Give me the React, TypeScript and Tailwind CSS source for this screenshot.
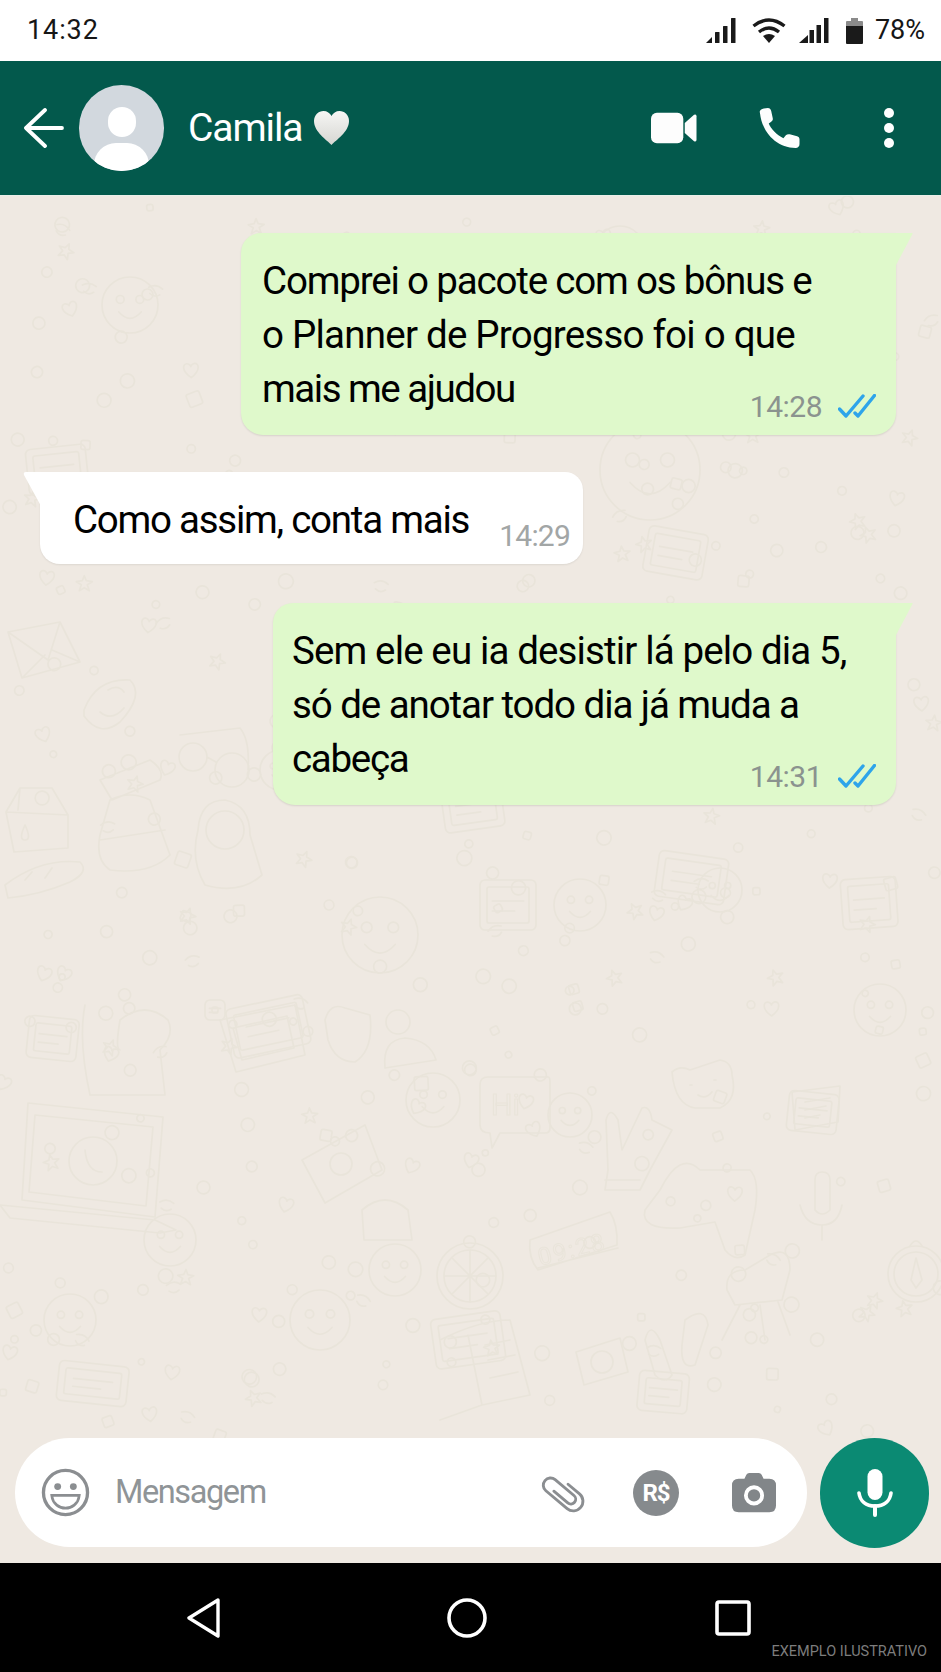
import React from "react";

const INK = "#e9e4da";

function mulberry(seed: number) {
  return () => {
    seed |= 0;
    seed = (seed + 0x6d2b79f5) | 0;
    let t = Math.imul(seed ^ (seed >>> 15), 1 | seed);
    t = (t + Math.imul(t ^ (t >>> 7), 61 | t)) ^ t;
    return ((t ^ (t >>> 14)) >>> 0) / 4294967296;
  };
}

function Doodles() {
  const rnd = mulberry(17);
  const small: React.ReactNode[] = [];
  for (let i = 0; i < 420; i++) {
    const x = rnd() * 941;
    const y = 196 + rnd() * 1240;
    const kind = rnd();
    const r = 3 + rnd() * 4.5;
    const rot = rnd() * 60 - 30;
    let el: React.ReactNode;
    if (kind < 0.62) el = <circle r={r} />;
    else if (kind < 0.72) el = <rect x={-r} y={-r} width={r * 2} height={r * 2} rx={2} />;
    else if (kind < 0.84) el = <path d="M0 -8 L2 -3 L8 -2 L3 1 L5 7 L0 4 L-5 7 L-3 1 L-8 -2 L-2 -3 Z" />;
    else if (kind < 0.92) el = <path d="M0 7 C-10 0 -8 -7 -4 -7 C-2 -7 0 -5 0 -4 C0 -5 2 -7 4 -7 C8 -7 10 0 0 7 Z" />;
    else el = <path d="M-7 -4 Q0 -9 7 -4 M-5 2 Q0 6 5 2" />;
    small.push(
      <g key={i} transform={`translate(${x.toFixed(1)} ${y.toFixed(1)}) rotate(${rot.toFixed(0)})`}>
        {el}
      </g>
    );
  }
  const face = (x: number, y: number, r: number) => (
    <g key={`f${x}-${y}`} transform={`translate(${x} ${y})`}>
      <circle r={r} />
      <circle cx={-r * 0.35} cy={-r * 0.2} r={r * 0.14} />
      <circle cx={r * 0.35} cy={-r * 0.2} r={r * 0.14} />
      <path d={`M${-r * 0.4} ${r * 0.25} Q0 ${r * 0.7} ${r * 0.4} ${r * 0.25}`} />
    </g>
  );
  const card = (x: number, y: number, w: number, h: number, rot: number) => (
    <g key={`c${x}-${y}`} transform={`translate(${x} ${y}) rotate(${rot})`}>
      <rect width={w} height={h} rx={5} />
      <rect x={7} y={7} width={w - 14} height={h - 14} rx={2} />
      <path d={`M${w * 0.22} ${h * 0.42} H${w * 0.78} M${w * 0.22} ${h * 0.62} H${w * 0.62}`} />
    </g>
  );
  return (
    <svg className="absolute inset-0 w-full h-full blur-[0.6px]" viewBox="0 196 941 1367" preserveAspectRatio="none" fill="none" stroke={INK} strokeWidth={1.7} strokeLinecap="round" strokeLinejoin="round" aria-hidden="true">
      {small}
      {/* laptop */}
      <path d="M28 1103 L163 1117 L155 1217 L22 1200 Z" />
      <path d="M35 1115 L153 1127 L146 1206 L29 1192 Z" />
      <path d="M0 1205 L155 1220 L176 1230 L160 1233 L10 1218 Z" />
      <circle cx="93" cy="1161" r="24" />
      <path d="M85 1150 Q87 1172 102 1172" />
      {/* envelope */}
      <path d="M8 632 L60 622 L80 662 L22 678 Z M8 632 L48 660 L60 622 M22 678 L45 655 M80 662 L52 650" />
      {/* lips face */}
      <path d="M84 710 Q96 678 130 680 Q145 695 120 722 Q100 738 84 716 Z M108 690 Q118 684 124 692 M100 712 Q112 722 124 708" />
      {/* glasses */}
      <circle cx="193" cy="757" r="14" />
      <circle cx="232" cy="770" r="17" />
      <path d="M180 735 L240 728 Q250 740 248 770 M207 757 L216 762" />
      {/* carton */}
      <path d="M6 812 L20 788 L52 788 L68 815 L68 848 L14 852 Z M20 788 L18 810 M6 812 L68 815" />
      <path d="M25 825 Q18 840 25 840 Q32 840 25 825 Z" />
      {/* backpack */}
      <path d="M100 780 L150 760 Q165 770 160 780 L112 800 Z M110 800 Q130 790 150 800 L170 855 Q150 875 110 870 Q95 860 100 835 Z M100 840 L165 830" />
      {/* astronaut */}
      <path d="M198 830 Q200 800 225 800 Q250 805 250 835 L262 875 Q240 895 205 885 Q190 860 198 830 Z" />
      <circle cx="225" cy="830" r="19" />
      {/* baguette */}
      <path d="M5 885 Q40 858 80 862 Q90 872 70 882 Q40 895 8 898 Z M25 880 L32 872 M45 878 L52 868" />
      {/* tablet */}
      <path d="M220 1020 L295 1005 L305 1055 L236 1072 Z M233 1028 L287 1016 L294 1048 L242 1060 Z" />
      {/* hand */}
      <path d="M325 1020 Q330 1002 345 1008 L370 1015 Q374 1050 355 1062 Q335 1062 328 1040 Z" />
      {/* dog */}
      <path d="M85 1005 Q78 1040 90 1095 L165 1095 L160 1050 Q175 1035 168 1020 Q145 1000 120 1020 Q115 1050 120 1050" />
      {/* person */}
      <circle cx="398" cy="1022" r="12" />
      <path d="M385 1068 Q382 1040 405 1038 Q430 1040 436 1060 Z" />
      {face(433, 1100, 27)}
      {/* camera card */}
      <path d="M302 1160 L365 1125 L382 1170 L325 1203 Z" />
      <circle cx="341" cy="1164" r="11" />
      {/* car */}
      <path d="M362 1210 Q385 1190 408 1210 L412 1240 L364 1240 Z" />
      {face(395, 1270, 26)}
      {/* Hi */}
      <path d="M488 1077 H548 Q550 1077 550 1082 V1128 Q550 1133 545 1133 H500 L492 1148 L490 1133 Q480 1133 480 1125 V1085 Q480 1077 488 1077 Z" />
      <text x="491" y="1115" fontFamily="Roboto, sans-serif" fontSize="30" strokeWidth="1.2">Hi</text>
      {/* raised hand */}
      <path d="M606 1120 Q610 1105 618 1120 L622 1150 L642 1108 Q650 1105 652 1120 L672 1130 L650 1170 L640 1190 H605 L608 1170 Z M605 1180 H640" />
      {/* bear */}
      <path d="M672 1072 Q680 1065 690 1070 L720 1060 Q732 1062 732 1075 Q738 1100 720 1108 H695 Q675 1105 672 1072 Z M690 1085 L692 1085 M714 1080 L716 1080 M698 1095 Q705 1100 712 1092" />
      {/* note */}
      <path d="M792 1092 L840 1086 L838 1122 L795 1130 Z M805 1102 L830 1098 M805 1110 L826 1106 M805 1118 L820 1115" />
      {/* controller / blob */}
      <path d="M660 1190 Q680 1150 700 1170 L750 1170 Q760 1180 755 1210 L745 1255 Q735 1262 725 1250 L715 1222 L680 1228 Q640 1230 645 1210 Z" />
      {/* mic */}
      <path d="M815 1180 Q815 1172 822 1172 Q830 1172 830 1180 V1210 Q822 1218 815 1210 Z M800 1205 Q805 1225 822 1225 Q838 1225 842 1205 M822 1225 V1240" />
      {/* clock */}
      <path d="M530 1240 L610 1212 Q618 1225 617 1245 L538 1270 Q528 1258 530 1240 Z M538 1268 L618 1248" />
      <text x="536" y="1258" fontFamily="Roboto, sans-serif" fontSize="24" strokeWidth="1" transform="rotate(-14 570 1245)" letterSpacing="2">09:28</text>
      {/* lemon */}
      <circle cx="470" cy="1276" r="33" />
      <circle cx="470" cy="1276" r="26" />
      <path d="M470 1250 V1302 M444 1276 H496 M452 1258 L488 1294 M488 1258 L452 1294" />
      {/* chair */}
      <path d="M727 1290 Q725 1270 745 1270 L770 1255 Q790 1245 790 1270 L782 1300 L735 1305 Z M740 1305 L722 1340 M760 1305 L765 1340 M778 1302 L790 1335" />
      {/* compass */}
      <circle cx="916" cy="1274" r="28" />
      <circle cx="916" cy="1274" r="22" />
      <path d="M916 1258 L922 1280 L916 1288 L911 1280 Z M910 1246 Q916 1236 922 1246" />
      {/* book */}
      <path d="M440 1340 Q480 1320 510 1320 L530 1395 L482 1405 L440 1420 M468 1335 L482 1405 M485 1345 L510 1340 M488 1360 L515 1355 M490 1378 L518 1372" />
      {/* camera */}
      <path d="M576 1352 L620 1338 L628 1372 L584 1385 Z" />
      <circle cx="602" cy="1362" r="11" />
      {/* flipflops */}
      <path d="M645 1340 Q650 1320 660 1340 L672 1375 Q665 1385 655 1375 Z M685 1320 Q705 1305 708 1325 L695 1365 Q680 1370 682 1345 Z" />
      {/* extras */}
      {[
        face(130, 305, 28), face(620, 250, 24), face(580, 905, 26), face(380, 935, 38), face(280, 770, 20), face(170, 1240, 26),
        face(320, 1320, 30), face(70, 1320, 26), face(720, 890, 22), face(880, 1010, 26), face(570, 1115, 22), face(650, 470, 50),
      ]}
      {[
        card(225, 1010, 78, 50, -12), card(660, 850, 70, 46, 8), card(25, 450, 60, 46, -6), card(60, 1360, 70, 40, 6),
        card(430, 1320, 70, 50, -8), card(650, 525, 60, 46, 10), card(840, 880, 55, 50, -4), card(790, 1090, 50, 40, 6),
        card(30, 1015, 50, 42, 6), card(205, 1000, 20, 20, 0), card(440, 790, 60, 44, -8), card(780, 610, 70, 50, 8),
        card(480, 880, 56, 50, 0), card(640, 1370, 50, 40, 5),
      ]}
    </svg>
  );
}

function Ticks() {
  return (
    <svg className="mt-[-2px]" width="38" height="24" viewBox="0 0 38 24" fill="none" stroke="#2ea4ea" strokeWidth="3.400" strokeLinecap="round" strokeLinejoin="round" aria-hidden="true">
      <path d="M1.500 15 L8 22 L25 2" />
      <path d="M17 19 L20 22 L36.500 1.500" />
    </svg>
  );
}

function Sent({ lines, time, width, pad }: { lines: { text: string; track: string }[]; time: string; width: string; pad: string }) {
  return (
    <div className={`relative self-end mr-[45px] ${width} rounded-b-[22px] rounded-tl-[20px] bg-[#dff9cb] shadow-[0_1px_2px_rgba(0,0,0,0.10)]`}>
      <svg className="absolute top-0 -right-[17px]" width="18" height="34" viewBox="0 0 18 34" aria-hidden="true">
        <path d="M0 0 H17 Q18 0 17.500 1 L0 34 Z" fill="#dff9cb" />
      </svg>
      <div className={`${pad} pt-[21px] pb-[19px]`}>
        {lines.map((l, i) => (
          <div key={i} className={`text-[38.500px] leading-[54px] ${l.track} text-black whitespace-nowrap h-[54px]`}>
            {l.text}
          </div>
        ))}
        <div className="absolute right-[20px] bottom-[11px] flex items-center gap-[16px]">
          <span className="text-[30px] leading-[34px] tracking-[-0.500px] text-[#8b938f]">{time}</span>
          <Ticks />
        </div>
      </div>
    </div>
  );
}

export default function App() {
  return (
    <div className="w-[941px] h-[1672px] flex flex-col overflow-hidden font-[Roboto,sans-serif] bg-[#efe9e2]">
      {/* status bar */}
      <div className="h-[61px] shrink-0 bg-white flex items-center justify-between pl-[27px] pr-[16px]">
        <span className="text-[27px] tracking-[0.900px] text-[#161616]">14:32</span>
        <div className="flex items-center">
          <svg width="32" height="28" viewBox="0 0 32 28" fill="#1a1a1a" aria-hidden="true">
            <path d="M1 26 L7 20 V26 Z" />
            <rect x="10" y="15" width="4.500" height="11" rx="0.500" />
            <rect x="18" y="9" width="4.500" height="17" rx="0.500" />
            <rect x="26" y="1" width="4.500" height="25" rx="0.500" />
          </svg>
          <svg className="ml-[15px]" width="34" height="28" viewBox="0 0 34 28" fill="none" stroke="#1a1a1a" strokeWidth="3.400" aria-hidden="true">
            <path d="M1.500 9 Q17 -3 32.500 9" />
            <path d="M7 15 Q17 7 27 15" />
            <path d="M17 26 L11 19 Q17 15 23 19 Z" fill="#1a1a1a" stroke="none" />
          </svg>
          <svg className="ml-[12px]" width="32" height="28" viewBox="0 0 32 28" fill="#1a1a1a" aria-hidden="true">
            <path d="M1 26 L10 18 V26 Z" />
            <rect x="11.500" y="13" width="4.500" height="13" />
            <rect x="18.500" y="8" width="4.500" height="18" />
            <rect x="26" y="1" width="4.500" height="25" />
          </svg>
          <svg className="ml-[16px]" width="17" height="28" viewBox="0 0 17 28" aria-hidden="true">
            <path d="M5 1 H12 V4 H16 A1 1 0 0 1 17 5 V9 H0 V5 A1 1 0 0 1 1 4 H5 Z" fill="#8a8a8a" />
            <path d="M0 9 H17 V26 A1 1 0 0 1 16 27 H1 A1 1 0 0 1 0 26 Z" fill="#1a1a1a" />
          </svg>
          <span className="ml-[12px] text-[27px] text-[#161616]">78%</span>
        </div>
      </div>

      {/* header */}
      <div className="h-[135px] shrink-0 bg-[#03594c] flex items-center border-b border-[#e9efe9] pl-[24px] pr-[47px] text-white">
        <svg width="40" height="40" viewBox="0 0 40 40" fill="none" stroke="#fff" strokeWidth="3.800" strokeLinecap="round" strokeLinejoin="round" aria-hidden="true">
          <path d="M38 20 H3" />
          <path d="M21 2 L2 20 L21 38" />
        </svg>
        <div className="ml-[15px] relative w-[85px] h-[86px] rounded-full bg-[#d2d8de] overflow-hidden">
          <div className="absolute left-[29px] top-[22px] w-[28px] h-[30px] rounded-full bg-white" />
          <div className="absolute left-[15px] top-[58px] w-[55px] h-[44px] rounded-full bg-white" />
        </div>
        <span className="ml-[24px] text-[39px] leading-none tracking-[-1.100px]">Camila</span>
        <svg className="ml-[11px]" width="37" height="36" viewBox="0 0 37 36" aria-hidden="true">
          <defs>
            <linearGradient id="hg" x1="0" y1="0" x2="0" y2="1">
              <stop offset="0" stopColor="#f6f6f4" />
              <stop offset="1" stopColor="#d6d6d2" />
            </linearGradient>
          </defs>
          <path d="M18.500 35 C14 30 1 22 1 11 C1 5 5.500 1 10.500 1 C14 1 17 3 18.500 6 C20 3 23 1 26.500 1 C31.500 1 36 5 36 11 C36 22 23 30 18.500 35 Z" fill="url(#hg)" />
        </svg>
        <div className="ml-auto flex items-center">
          <svg width="46" height="32" viewBox="0 0 47 32" fill="#fdfdfd" aria-hidden="true">
            <rect x="0" y="0.500" width="33" height="31" rx="6" />
            <path d="M34.500 11 L44 2.500 Q46.500 1.500 46.500 4 V28 Q46.500 30.500 44 29.500 L34.500 21 Z" />
          </svg>
          <svg className="ml-[62px]" width="41" height="41" viewBox="0 0 42 42" fill="#fdfdfd" aria-hidden="true">
            <path d="M1 5 C0 3 2 1 5 0.500 L9 0 C11 0 12 1 12.500 3 L14 10 C14.500 12 14 13 12.500 14 L10 16 C12 21 18 28 25 31 L27.500 28 C28.500 27 30 26.500 31.500 27 L39 29 C40.500 29.500 41.500 30.500 41.500 32 V37 C41.500 39.500 40 41 37.500 41 C18 41 3 25 1 5 Z" />
          </svg>
          <div className="ml-[84px] flex flex-col gap-[5px]">
            <div className="w-[10px] h-[10px] rounded-full bg-white" />
            <div className="w-[10px] h-[10px] rounded-full bg-white" />
            <div className="w-[10px] h-[10px] rounded-full bg-white" />
          </div>
        </div>
      </div>

      {/* chat */}
      <div className="relative flex-1 min-h-0 bg-[#efe9e2] flex flex-col">
        <Doodles />
        <div className="relative flex-1 flex flex-col pt-[37px]">
          <Sent
            lines={[
              { text: "Comprei o pacote com os bônus e", track: "tracking-[-1.170px]" },
              { text: "o Planner de Progresso foi o que", track: "tracking-[-0.770px]" },
              { text: "mais me ajudou", track: "tracking-[-1.480px]" },
            ]}
            time="14:28"
            width="w-[655px]"
            pad="pl-[21px]"
          />
          <div className="relative self-start ml-[40px] mt-[37px] w-[543px] h-[92px] rounded-b-[20px] rounded-tr-[18px] bg-white shadow-[0_1px_2px_rgba(0,0,0,0.08)]">
            <svg className="absolute top-0 -left-[17px]" width="18" height="34" viewBox="0 0 18 34" aria-hidden="true">
              <path d="M18 0 H3 Q0 0 1 3 L18 34 Z" fill="#fff" />
            </svg>
            <div className="pl-[33px] pt-[21px] text-[38.500px] leading-[54px] tracking-[-1.250px] text-black whitespace-nowrap">Como assim, conta mais</div>
            <span className="absolute right-[13px] bottom-[11px] text-[30px] leading-[34px] tracking-[-0.800px] text-[#a2a6a6]">14:29</span>
          </div>
          <div className="mt-[39px] flex flex-col">
            <Sent
              lines={[
                { text: "Sem ele eu ia desistir lá pelo dia 5,", track: "tracking-[-0.870px]" },
                { text: "só de anotar todo dia já muda a", track: "tracking-[-1.070px]" },
                { text: "cabeça", track: "tracking-[-1.300px]" },
              ]}
              time="14:31"
              width="w-[623px]"
              pad="pl-[19px]"
            />
          </div>
        </div>

        {/* input */}
        <div className="relative h-[126px] shrink-0 flex items-start pl-[15px] pt-[1px] gap-[13px]">
          <div className="w-[792px] h-[109px] rounded-full bg-white flex items-center pl-[26px] pr-[31px]">
            <svg width="49" height="49" viewBox="0 0 50 50" fill="none" stroke="#8b8e91" strokeWidth="3.400" aria-hidden="true">
              <circle cx="25" cy="25" r="22.500" />
              <circle cx="17" cy="19" r="3.500" fill="#8b8e91" stroke="none" />
              <circle cx="33" cy="19" r="3.500" fill="#8b8e91" stroke="none" />
              <path d="M11 28 H39 C38 37 31 41 25 41 C19 41 12 37 11 28 Z" strokeWidth="2.800" />
              <path d="M14 33 H36" strokeWidth="2" stroke="#fff" />
            </svg>
            <span className="ml-[25px] text-[32.500px] tracking-[-1.400px] text-[#8f9497]">Mensagem</span>
            <div className="ml-auto flex items-center">
              <svg width="47" height="44" viewBox="0 0 44 41" fill="none" stroke="#8b8e91" strokeWidth="2.700" strokeLinecap="round" strokeLinejoin="round" aria-hidden="true">
                <g transform="translate(22 20.500) rotate(40) translate(-21 -9)">
                  <path d="M19 0 H33 A9 9 0 0 1 33 18 H7 A6.750 6.750 0 0 1 7 4.500 H30 A4.500 4.500 0 0 1 30 13.500 H13" />
                </g>
              </svg>
              <div className="ml-[46px] w-[46px] h-[46px] rounded-full bg-[#868a8d] flex items-center justify-center text-white text-[24px] font-bold tracking-[-1px]">R$</div>
              <svg className="ml-[53px]" width="44" height="42" viewBox="0 0 46 42" aria-hidden="true">
                <path fillRule="evenodd" fill="#828689" d="M13 6 L15 2 Q16 0 18 0 H28 Q30 0 31 2 L33 6 H39 Q46 6 46 13 V34 Q46 41 39 41 H7 Q0 41 0 34 V13 Q0 6 7 6 Z M23 13 A10.500 10.500 0 1 0 23 34 A10.500 10.500 0 1 0 23 13 Z M23 17 A6.500 6.500 0 1 1 23 30 A6.500 6.500 0 1 1 23 17 Z" />
              </svg>
            </div>
          </div>
          <div className="w-[109px] h-[110px] rounded-full bg-[#0b8a73] flex items-center justify-center">
            <svg width="36" height="48" viewBox="0 0 36 48" fill="none" aria-hidden="true">
              <rect x="10.500" y="0" width="15" height="31" rx="7.500" fill="#fff" />
              <path d="M2 24 C3 32 9 37 18 37 C27 37 33 32 34 24" stroke="#fff" strokeWidth="3.600" strokeLinecap="round" />
              <path d="M18 37 V46" stroke="#fff" strokeWidth="4" strokeLinecap="round" />
            </svg>
          </div>
        </div>
      </div>

      {/* nav */}
      <div className="relative h-[109px] shrink-0 bg-black">
        <div className="flex items-center h-full pl-[185px]">
          <svg width="36" height="40" viewBox="0 0 36 40" fill="none" stroke="#fff" strokeWidth="3.400" strokeLinejoin="round" aria-hidden="true">
            <path d="M33 2 L4 20 L33 38 Z" />
          </svg>
          <svg className="ml-[226px]" width="40" height="40" viewBox="0 0 40 40" fill="none" stroke="#fff" strokeWidth="3.600" aria-hidden="true">
            <circle cx="20" cy="20" r="18" />
          </svg>
          <svg className="ml-[228px]" width="36" height="36" viewBox="0 0 36 36" fill="none" stroke="#fff" strokeWidth="3.600" strokeLinejoin="round" aria-hidden="true">
            <rect x="2" y="2" width="32" height="32" rx="2" />
          </svg>
        </div>
        <span className="absolute right-[14px] bottom-[13px] text-[14.500px] leading-none text-[#7d7d7d]">EXEMPLO ILUSTRATIVO</span>
      </div>
    </div>
  );
}
